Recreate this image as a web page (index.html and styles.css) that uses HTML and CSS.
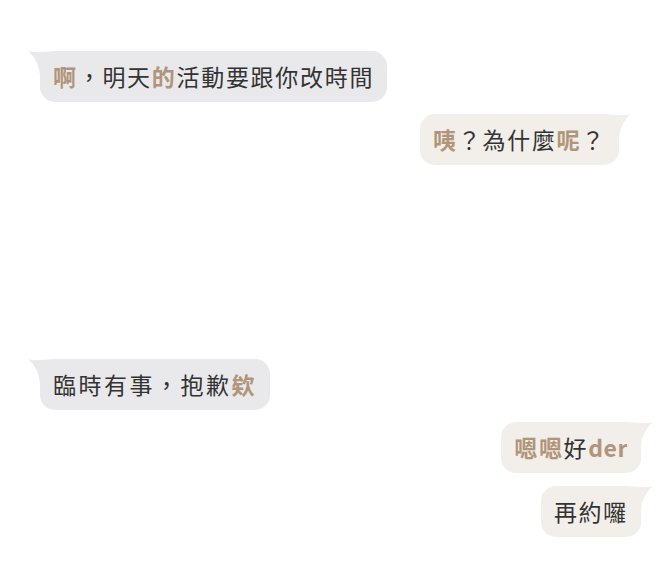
FILE: index.html
```html
<!DOCTYPE html>
<html lang="zh-Hant">
<head>
<meta charset="utf-8">
<link rel="stylesheet" href="styles.css">
</head>
<body>
<div class="chat">
  <div class="row row-left row-first">
    <div class="bubble bubble-left">
      <svg class="tail tail-left" viewBox="0 0 26 24" width="26" height="24"><path d="M0 0 C6 2 14 1 26 0 L26 24 L12 24 C11 13 6 5 0 0 Z"/></svg>
      <p class="text"><span class="hl">啊</span>，明天<span class="hl">的</span>活動要跟你改時間</p>
    </div>
  </div>
  <div class="row row-right row-near">
    <div class="bubble bubble-right bubble-inset">
      <svg class="tail tail-right" viewBox="0 0 26 24" width="26" height="24"><path d="M26 0 C20 2 12 1 0 0 L0 24 L14 24 C15 13 20 5 26 0 Z"/></svg>
      <p class="text"><span class="hl">咦</span>？為什麼<span class="hl">呢</span>？</p>
    </div>
  </div>
  <div class="row row-left row-far">
    <div class="bubble bubble-left">
      <svg class="tail tail-left" viewBox="0 0 26 24" width="26" height="24"><path d="M0 0 C6 2 14 1 26 0 L26 24 L12 24 C11 13 6 5 0 0 Z"/></svg>
      <p class="text text-wide">臨時有事，抱歉<span class="hl">欸</span></p>
    </div>
  </div>
  <div class="row row-right row-near">
    <div class="bubble bubble-right">
      <svg class="tail tail-right" viewBox="0 0 26 24" width="26" height="24"><path d="M26 0 C20 2 12 1 0 0 L0 24 L14 24 C15 13 20 5 26 0 Z"/></svg>
      <p class="text"><span class="hl">嗯嗯</span>好<span class="hl latin">der</span></p>
    </div>
  </div>
  <div class="row row-right row-near2">
    <div class="bubble bubble-right">
      <svg class="tail tail-right" viewBox="0 0 26 24" width="26" height="24"><path d="M26 0 C20 2 12 1 0 0 L0 24 L14 24 C15 13 20 5 26 0 Z"/></svg>
      <p class="text">再約囉</p>
    </div>
  </div>
</div>
</body>
</html>
```
FILE: styles.css
```css
html, body {
  margin: 0;
  padding: 0;
  background: #ffffff;
}
body {
  font-family: "Noto Sans CJK TC", "Noto Sans", sans-serif;
  color: #333333;
}
.chat {
  display: flex;
  flex-direction: column;
  width: 668px;
}
.row {
  display: flex;
}
.row-left {
  justify-content: flex-start;
  padding-left: 40px;
}
.row-right {
  justify-content: flex-end;
  padding-right: 27px;
}
.row-first {
  margin-top: 51px;
}
.row-near {
  margin-top: 12px;
}
.row-near2 {
  margin-top: 13px;
}
.row-far {
  margin-top: 194px;
}
.bubble {
  position: relative;
  height: 51px;
  box-sizing: border-box;
  padding: 11px 13px;
  border-radius: 15px;
}
.text {
  margin: 0;
  font-size: 23px;
  letter-spacing: 1.7px;
  line-height: 29px;
  white-space: nowrap;
}
.text-wide {
  letter-spacing: 2.5px;
}
.bubble-left {
  background: #e9e9eb;
}
.bubble-right {
  background: #f2eee9;
}
.bubble-inset {
  margin-right: 22px;
}
.tail {
  position: absolute;
  top: 0;
}
.tail-left {
  left: -12px;
  fill: #e9e9eb;
}
.tail-right {
  right: -12px;
  fill: #f2eee9;
}
.hl {
  color: #b0957a;
  font-weight: 700;
}
.latin {
  letter-spacing: 0.5px;
}
```
